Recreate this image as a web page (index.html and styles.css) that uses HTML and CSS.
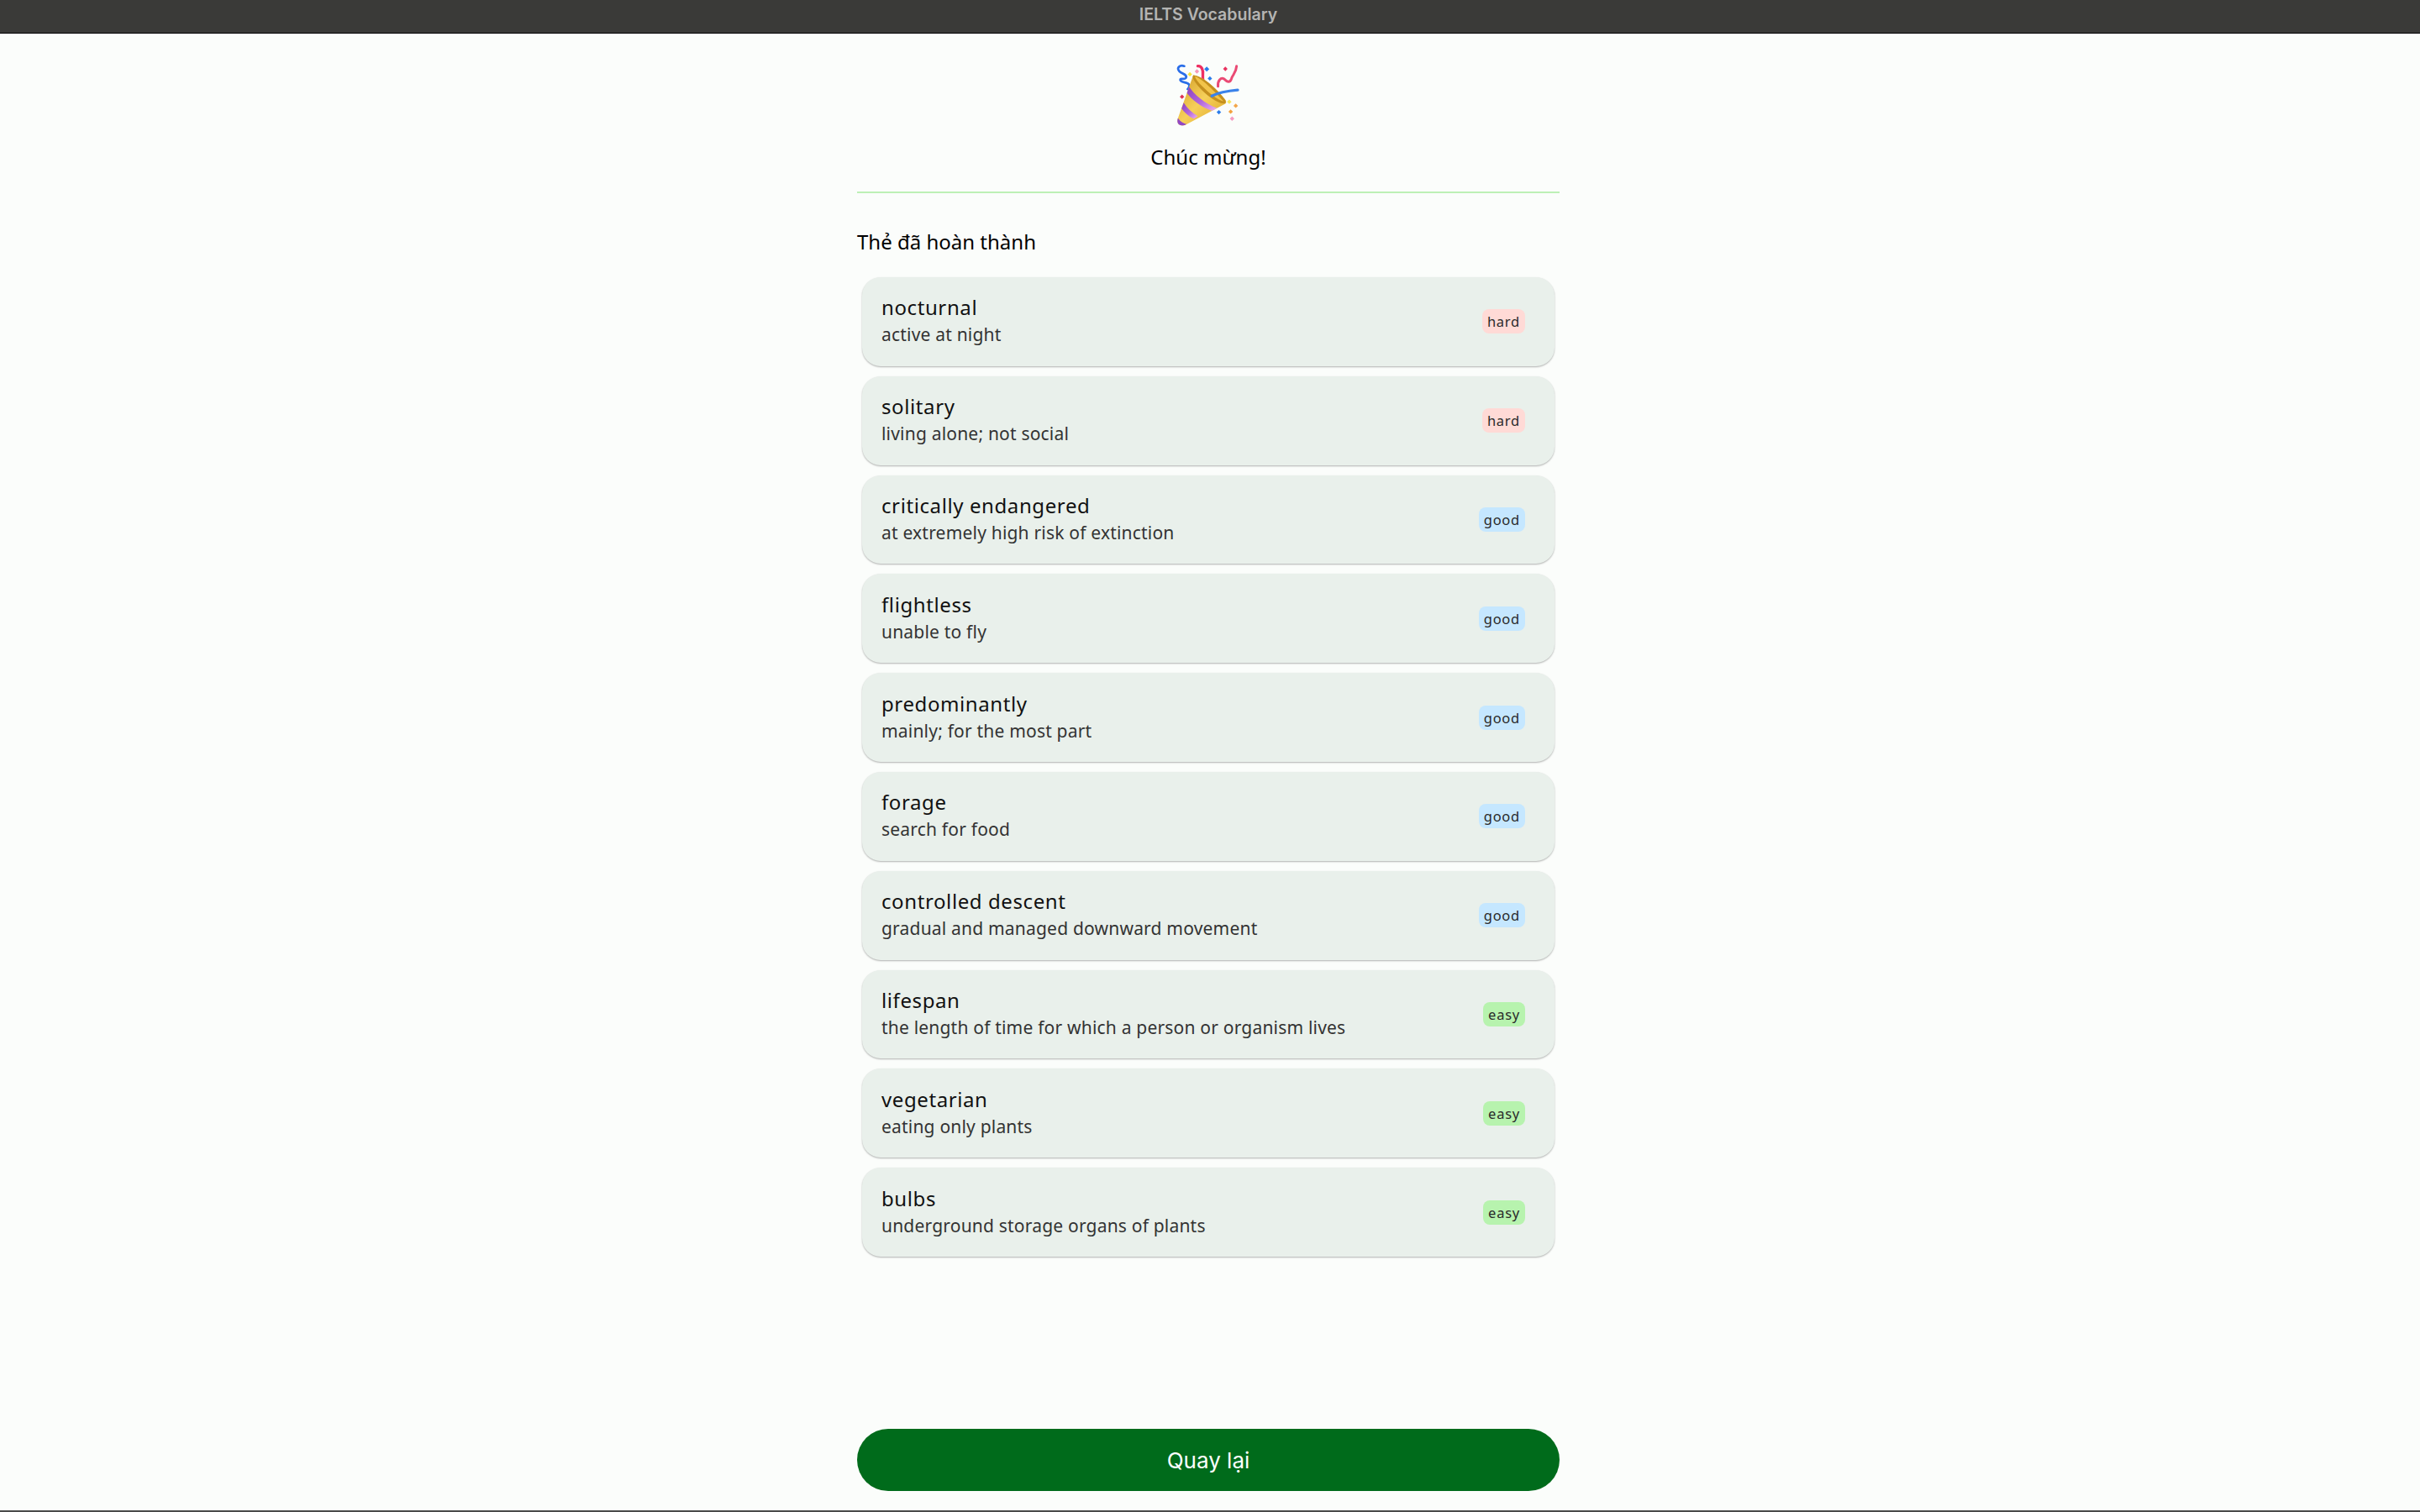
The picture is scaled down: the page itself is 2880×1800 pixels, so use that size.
FILE: index.html
```html
<!DOCTYPE html>
<html lang="vi">
<head>
    <meta charset="UTF-8">
    <title>IELTS Vocabulary</title>
    <link rel="stylesheet" href="styles.css">
</head>
<body>
    <div class="titlebar">IELTS Vocabulary</div>
    <div class="page">
        <div class="summary">
            <svg class="party" viewBox="122 48 230 230" width="77" height="77">
                <defs>
                    <linearGradient id="cone" x1="0" y1="0" x2="1" y2="1">
                        <stop offset="0" stop-color="#d09a24"/>
                        <stop offset="0.5" stop-color="#f6d05a"/>
                        <stop offset="1" stop-color="#dca422"/>
                    </linearGradient>
                    <linearGradient id="stripe" x1="0" y1="0" x2="1" y2="1">
                        <stop offset="0" stop-color="#8a3fc0"/>
                        <stop offset="0.55" stop-color="#b268dc"/>
                        <stop offset="1" stop-color="#f0b4f0"/>
                    </linearGradient>
                    <clipPath id="coneClip">
                        <path d="M182 88 L127 243 C121 262 136 272 154 265 L296 190 C302 184 298 176 290 170 C260 130 215 92 182 88 Z"/>
                    </clipPath>
                </defs>
                <path d="M150 56 C134 50 122 62 132 74 C142 84 162 86 156 98 C150 106 134 96 136 106 C140 116 166 112 168 124 C168 132 164 136 162 138" fill="none" stroke="#2a6ee8" stroke-width="8" stroke-linecap="round"/>
                <path d="M198 56 C212 54 218 70 216 88 C214 104 220 116 221 134" fill="none" stroke="#ee2f62" stroke-width="10" stroke-linecap="round"/>
                <path d="M270 128 C268 108 280 94 292 102 C302 112 312 118 318 100 C322 86 334 82 336 56" fill="none" stroke="#ea4a74" stroke-width="9" stroke-linecap="round"/>
                <path d="M182 88 L127 243 C121 262 136 272 154 265 L296 190 C302 184 298 176 290 170 C260 130 215 92 182 88 Z" fill="url(#cone)"/>
                <g clip-path="url(#coneClip)">
                    <path d="M166 128 C184 156 225 192 268 206 L252 216 C208 202 174 172 158 150 Z" fill="url(#stripe)"/>
                    <path d="M148 186 C160 206 178 222 198 234 L184 244 C164 234 150 220 140 206 Z" fill="url(#stripe)"/>
                    <path d="M126 238 C132 250 144 260 158 262 L140 276 L118 262 Z" fill="#9148c4"/>
                </g>
                <path d="M182 88 C205 88 245 118 272 148 C290 168 302 180 296 188 C286 194 250 176 222 150 C196 126 174 98 182 88 Z" fill="#c4901e"/>
                <path d="M188 92 C208 98 250 136 290 182 C268 176 236 150 214 128 C200 114 190 102 188 92 Z" fill="#f2c44a"/>
                <path d="M248 162 C276 148 306 144 340 141" fill="none" stroke="#3a82ea" stroke-width="10" stroke-linecap="round"/>
                <path d="M170 77 l8 8 -8 8 -8 -8z" fill="#f7e63c"/>
                <path d="M195 67 l8 8 -8 8 -8 -8z" fill="#f59ab8"/>
                <path d="M230 58 l9 9 -9 9 -9 -9z" fill="#2b7ceb"/>
                <path d="M241 92 l8 8 -8 8 -8 -8z" fill="#2b7ceb"/>
                <path d="M296 58 l8 8 -8 8 -8 -8z" fill="#e8325f"/>
                <path d="M142 157 l8 8 -8 8 -8 -8z" fill="#e02f55"/>
                <path d="M310 175 l8 8 -8 8 -8 -8z" fill="#f8e85c"/>
                <path d="M333 189 l8 8 -8 8 -8 -8z" fill="#f3a64a"/>
                <path d="M315 210 l8 8 -8 8 -8 -8z" fill="#f3a13e"/>
                <path d="M273 212 l8 8 -8 8 -8 -8z" fill="#2b7ceb"/>
                <path d="M320 235 l8 8 -8 8 -8 -8z" fill="#f59ac0"/>
            </svg>
            <div class="summary-title">Chúc mừng!</div>
        </div>
        <div class="section-title">Thẻ đã hoàn thành</div>
        <div class="card-list">
            <div class="card">
                <div><div class="word">nocturnal</div><div class="meaning">active at night</div></div>
                <span class="badge hard">hard</span>
            </div>
            <div class="card">
                <div><div class="word">solitary</div><div class="meaning">living alone; not social</div></div>
                <span class="badge hard">hard</span>
            </div>
            <div class="card">
                <div><div class="word">critically endangered</div><div class="meaning">at extremely high risk of extinction</div></div>
                <span class="badge good">good</span>
            </div>
            <div class="card">
                <div><div class="word">flightless</div><div class="meaning">unable to fly</div></div>
                <span class="badge good">good</span>
            </div>
            <div class="card">
                <div><div class="word">predominantly</div><div class="meaning">mainly; for the most part</div></div>
                <span class="badge good">good</span>
            </div>
            <div class="card">
                <div><div class="word">forage</div><div class="meaning">search for food</div></div>
                <span class="badge good">good</span>
            </div>
            <div class="card">
                <div><div class="word">controlled descent</div><div class="meaning">gradual and managed downward movement</div></div>
                <span class="badge good">good</span>
            </div>
            <div class="card">
                <div><div class="word">lifespan</div><div class="meaning">the length of time for which a person or organism lives</div></div>
                <span class="badge easy">easy</span>
            </div>
            <div class="card">
                <div><div class="word">vegetarian</div><div class="meaning">eating only plants</div></div>
                <span class="badge easy">easy</span>
            </div>
            <div class="card">
                <div><div class="word">bulbs</div><div class="meaning">underground storage organs of plants</div></div>
                <span class="badge easy">easy</span>
            </div>
        </div>
        <button class="back-button">Quay lại</button>
    </div>
    <div class="window-edge"></div>
</body>
</html>
```

FILE: styles.css
```css
body {
    font-family: "Noto Sans", sans-serif;
    background-color: #fbfdfb;
    display: flex;
    flex-direction: column;
    height: 100vh;
    margin: 0;
    overflow: hidden;
    color: #111;
}
.titlebar {
    height: 39px;
    line-height: 34px;
    flex-shrink: 0;
    padding-right: 4px;
    background-color: #3a3a38;
    border-bottom: 1px solid #000;
    box-shadow: 0 2px 0 #fff;
    color: #b4b4b2;
    font-family: Inter, sans-serif;
    font-size: 19.5px;
    font-weight: 600;
    text-align: center;
}
.page {
    flex: 1;
    width: 836px;
    margin: 0 auto;
    padding-right: 4px;
    display: flex;
    flex-direction: column;
}
.summary {
    display: flex;
    flex-direction: column;
    align-items: center;
    padding-top: 36px;
    height: 152px;
    border-bottom: 2px solid #bdf0b6;
}
.party {
    display: block;
}
.summary-title {
    margin-top: 16px;
    font-size: 24px;
    line-height: 36px;
    color: #000;
}
.section-title {
    margin-top: 40px;
    font-size: 24px;
    line-height: 36px;
    color: #000;
}
.card-list {
    display: flex;
    flex-direction: column;
    gap: 12px;
    margin-top: 24px;
    padding: 0 6px;
}
.card {
    height: 104.8px;
    display: flex;
    align-items: center;
    justify-content: space-between;
    padding: 0 35px 1px 23px;
    background-color: #e9f0eb;
    border-radius: 22px;
    box-shadow: 0 1px 2px rgba(0, 0, 0, 0.3);
}
.word {
    font-size: 24px;
    line-height: 32px;
    letter-spacing: 0.6px;
    color: #111;
}
.meaning {
    font-size: 21px;
    line-height: 32px;
    letter-spacing: 0.2px;
    color: #333;
}
.badge {
    height: 29px;
    line-height: 29px;
    padding: 0 6px;
    margin-top: 1px;
    border-radius: 8px;
    font-size: 16.5px;
    letter-spacing: 0.75px;
    color: #2a2a2a;
}
.hard {
    background-color: #ffdad6;
}
.good {
    background-color: #c5e7ff;
}
.easy {
    background-color: #b7f3ae;
}
.back-button {
    margin-top: auto;
    margin-bottom: 23px;
    height: 74px;
    flex-shrink: 0;
    border: none;
    border-radius: 37px;
    background-color: #006b1b;
    color: #fff;
    font-family: Inter, sans-serif;
    font-size: 26px;
}
.window-edge {
    height: 2px;
    flex-shrink: 0;
    background-color: #4a4a4a;
}
```
